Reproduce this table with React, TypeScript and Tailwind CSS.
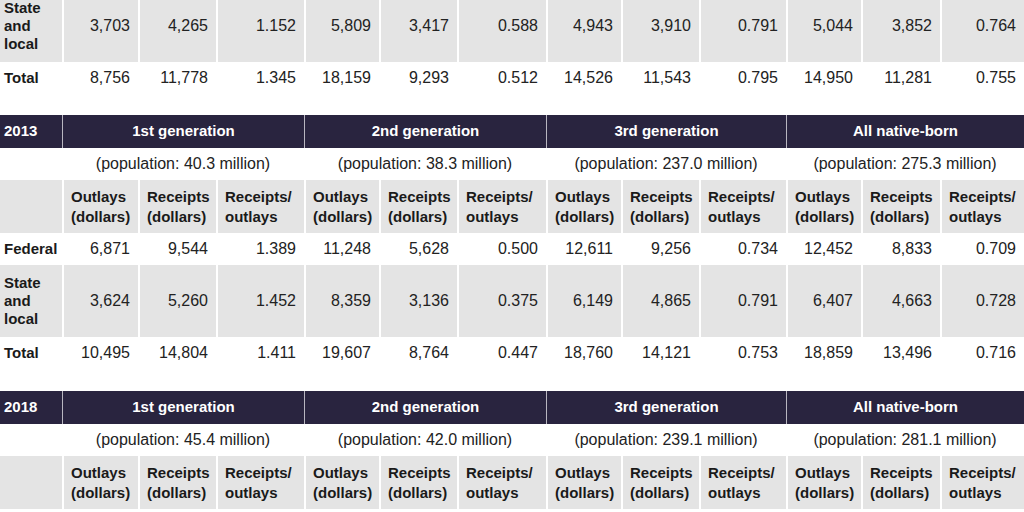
import React from "react";

const COLS = "62px 76px 78px 88px 75px 78px 89px 75px 78px 87px 75px 79px 84px";

type Row = [string, string[]];

const font = { fontFamily: '"Liberation Sans", Arial, sans-serif' };

function DataRow({ label, values, grey, tall }: { label: string; values: string[]; grey?: boolean; tall?: boolean }) {
  const bg = grey ? "bg-[#e4e4e4]" : "bg-white";
  const h = tall ? "h-[72px]" : "h-[32px]";
  return (
    <div className="grid" style={{ gridTemplateColumns: COLS }}>
      <div className={`${bg} ${h} flex items-center pl-[4px] pr-1 text-[15px] font-bold leading-[18px] text-[#1a1a1a]`}>
        {label}
      </div>
      {values.map((v, i) => (
        <div
          key={i}
          className={`${bg} ${h} border-l-2 border-white flex items-center justify-end pr-[8px] text-[16px] text-[#222]`}
        >
          {v}
        </div>
      ))}
    </div>
  );
}

function Header({ year, pops }: { year: string; pops: string[] }) {
  const gens = ["1st generation", "2nd generation", "3rd generation", "All native-born"];
  return (
    <>
      <div className="grid h-[33px] bg-[#29243f]" style={{ gridTemplateColumns: "62px 242px 242px 240px 238px" }}>
        <div className="flex items-center pl-[4px] text-[15px] font-bold text-white">{year}</div>
        {gens.map((g) => (
          <div key={g} className="flex items-center justify-center border-l-[1.5px] border-[#b8b6c0] text-[15px] font-bold text-white">
            {g}
          </div>
        ))}
      </div>
      <div className="grid h-[32px] bg-white" style={{ gridTemplateColumns: "62px 242px 242px 240px 238px" }}>
        <div />
        {pops.map((p) => (
          <div key={p} className="flex items-center justify-center text-[16px] text-[#222]">
            (population: {p} million)
          </div>
        ))}
      </div>
      <div className="grid h-[53px]" style={{ gridTemplateColumns: COLS }}>
        <div className="bg-[#e4e4e4]" />
        {Array.from({ length: 4 }).flatMap((_, g) => [
          <div key={`o${g}`} className="bg-[#e4e4e4] border-l-2 border-white flex flex-col justify-center pl-[7px] text-[15px] font-bold leading-[20px] text-[#1a1a1a]">
            <span>Outlays</span>
            <span>(dollars)</span>
          </div>,
          <div key={`r${g}`} className="bg-[#e4e4e4] border-l-2 border-white flex flex-col justify-center pl-[7px] text-[15px] font-bold leading-[20px] text-[#1a1a1a]">
            <span>Receipts</span>
            <span>(dollars)</span>
          </div>,
          <div key={`ro${g}`} className="bg-[#e4e4e4] border-l-2 border-white flex flex-col justify-center pl-[7px] text-[15px] font-bold leading-[20px] text-[#1a1a1a]">
            <span>Receipts/</span>
            <span>outlays</span>
          </div>,
        ])}
      </div>
    </>
  );
}

export default function App() {
  return (
    <div className="w-[1024px] h-[512px] overflow-hidden bg-white" style={font}>
      <div className="-mt-[10px]">
        <DataRow label="State and local" grey tall values={["3,703", "4,265", "1.152", "5,809", "3,417", "0.588", "4,943", "3,910", "0.791", "5,044", "3,852", "0.764"]} />
        <DataRow label="Total" values={["8,756", "11,778", "1.345", "18,159", "9,293", "0.512", "14,526", "11,543", "0.795", "14,950", "11,281", "0.755"]} />
        <div className="h-[21px]" />
        <Header year="2013" pops={["40.3", "38.3", "237.0", "275.3"]} />
        <DataRow label="Federal" values={["6,871", "9,544", "1.389", "11,248", "5,628", "0.500", "12,611", "9,256", "0.734", "12,452", "8,833", "0.709"]} />
        <DataRow label="State and local" grey tall values={["3,624", "5,260", "1.452", "8,359", "3,136", "0.375", "6,149", "4,865", "0.791", "6,407", "4,663", "0.728"]} />
        <DataRow label="Total" values={["10,495", "14,804", "1.411", "19,607", "8,764", "0.447", "18,760", "14,121", "0.753", "18,859", "13,496", "0.716"]} />
        <div className="h-[22px]" />
        <Header year="2018" pops={["45.4", "42.0", "239.1", "281.1"]} />
      </div>
    </div>
  );
}
